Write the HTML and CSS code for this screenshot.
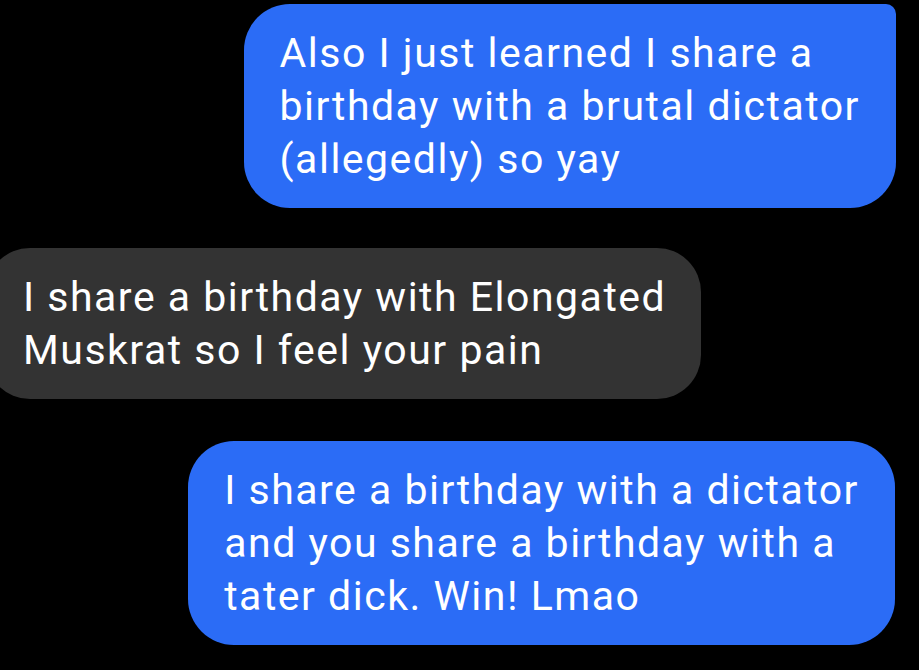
FILE: index.html
```html
<!DOCTYPE html>
<html>
<head>
<meta charset="utf-8">
<link rel="stylesheet" href="styles.css">
</head>
<body>
<div class="thread">
  <div class="bubble out first">Also I just learned I share a<br>birthday with a brutal dictator<br>(allegedly) so yay</div>
  <div class="bubble in">I share a birthday with Elongated<br>Muskrat so I feel your pain</div>
  <div class="bubble out last">I share a birthday with a dictator<br>and you share a birthday with a<br>tater dick. Win! Lmao</div>
</div>
</body>
</html>
```
FILE: styles.css
```css
html, body {
  margin: 0;
  padding: 0;
  background: #000;
  overflow: hidden;
}
.thread {
  width: 919px;
  height: 670px;
  display: flex;
  flex-direction: column;
  align-items: flex-end;
  padding-top: 4px;
  box-sizing: border-box;
  font-family: Roboto, "Noto Sans", sans-serif;
  font-size: 41px;
  letter-spacing: 1.5px;
  line-height: 53px;
  color: #fff;
}
.bubble {
  width: fit-content;
  padding: 23px 36px 22px 36px;
  border-radius: 46px;
  white-space: nowrap;
}
.out {
  background: #2b6cf6;
  margin-right: 23px;
}
.out.first {
  border-top-right-radius: 10px;
}
.in {
  background: #333333;
  align-self: flex-start;
  margin-left: -14px;
  margin-top: 40px;
  padding-left: 37px;
  padding-right: 35px;
  border-radius: 44px;
}
.out.last {
  margin-top: 42px;
  margin-right: 24px;
}
```
